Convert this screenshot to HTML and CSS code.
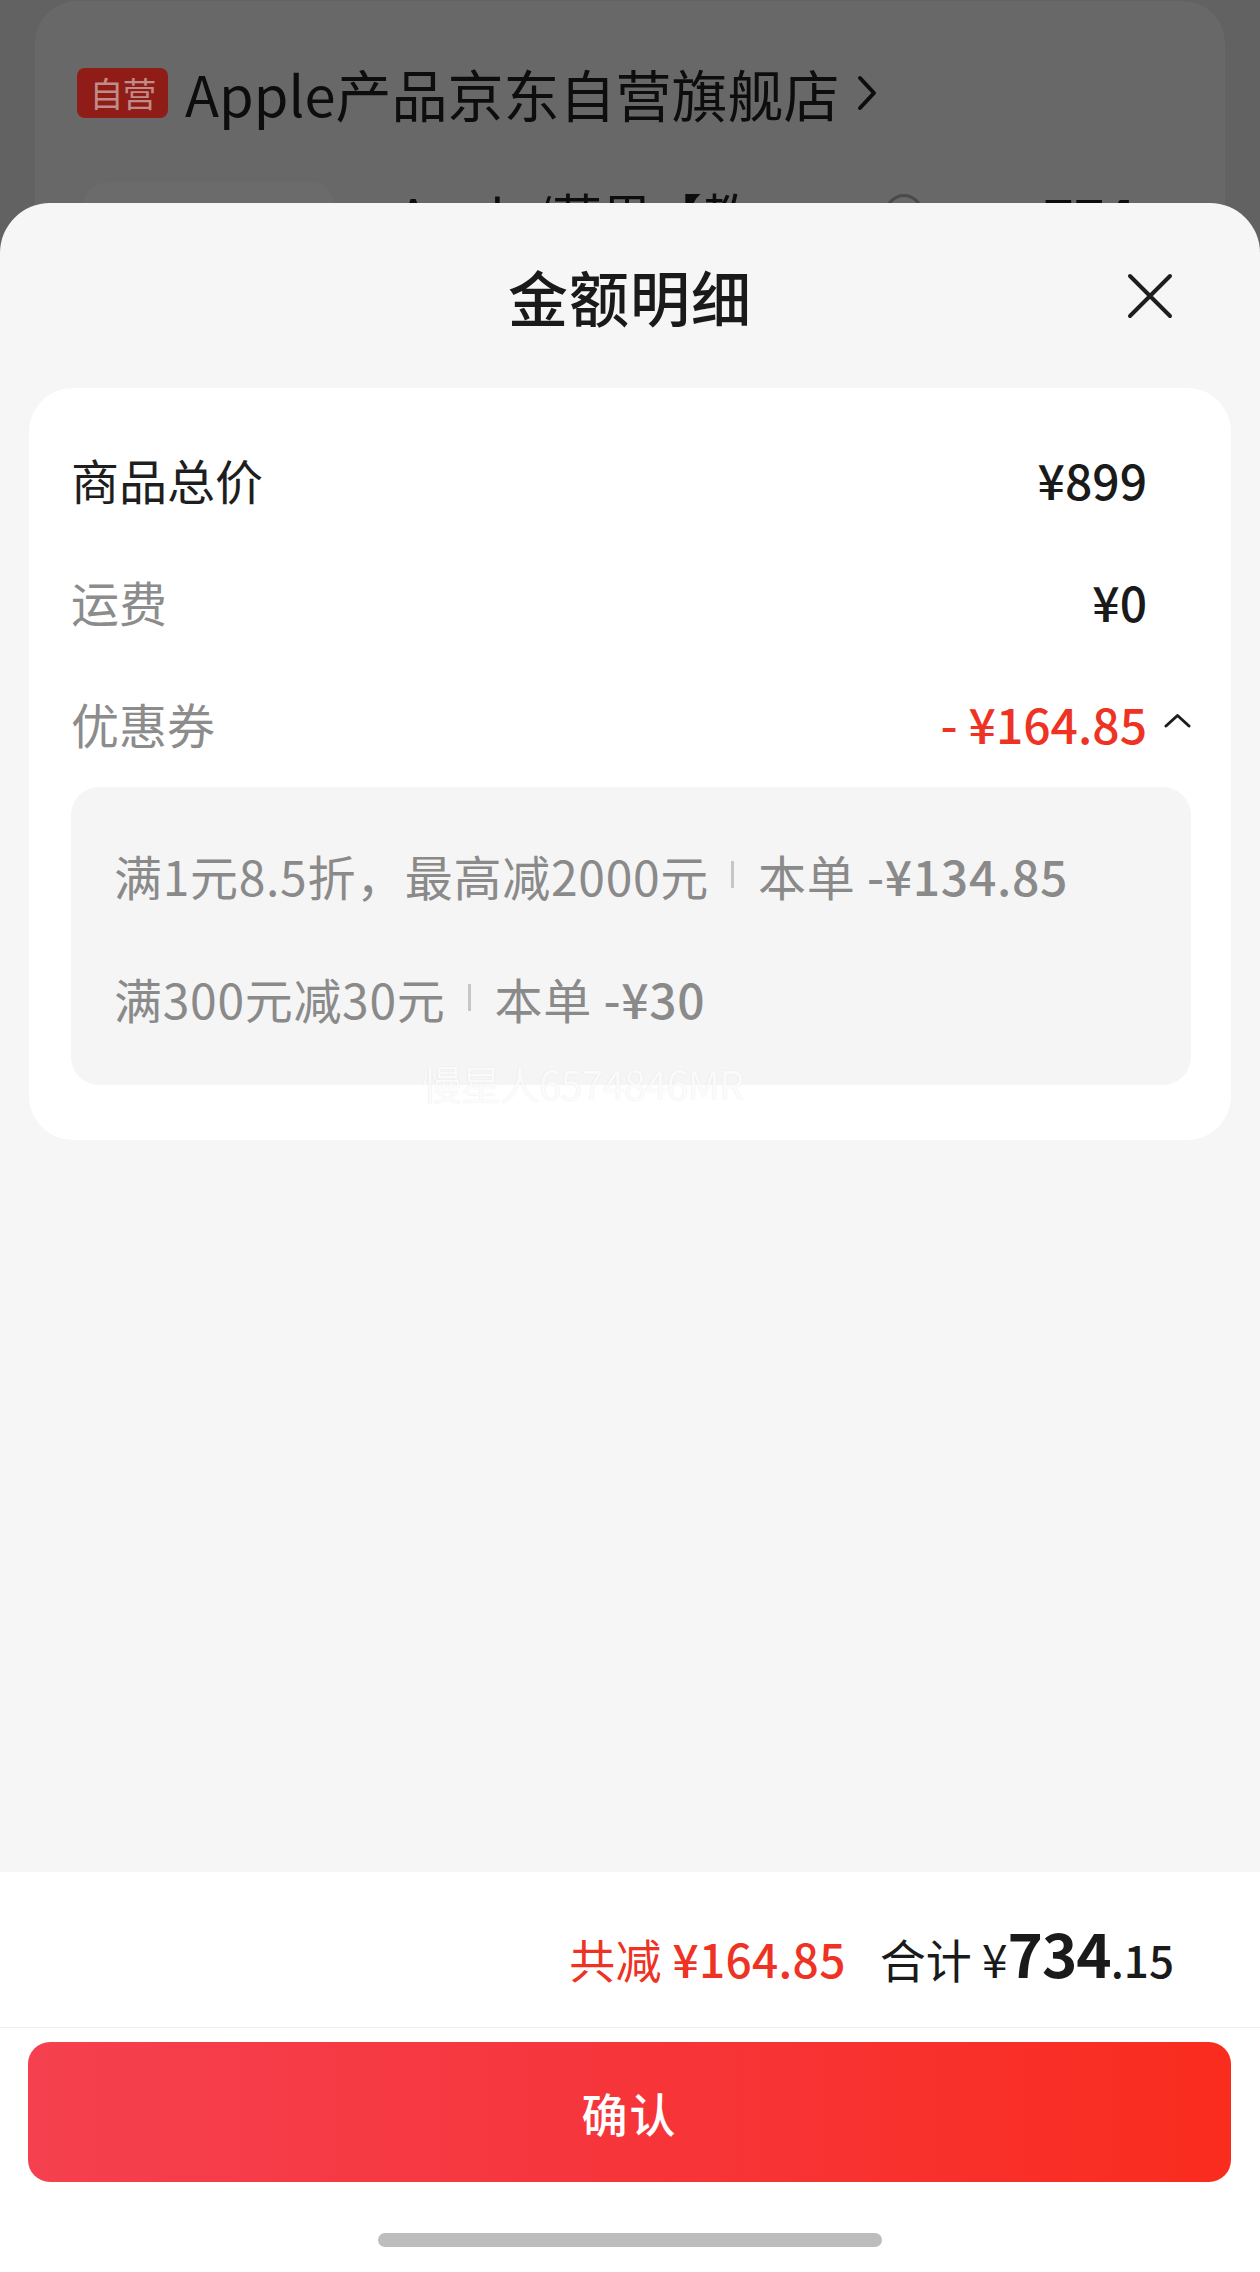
FILE: index.html
```html
<!DOCTYPE html>
<html lang="zh-CN">
<head>
<meta charset="utf-8">
<title>金额明细</title>
<link rel="stylesheet" href="styles.css">
</head>
<body>
<div class="page">
  <div class="store-card">
    <div class="store-row">
      <span class="badge">自营</span>
      <span class="store-name">Apple产品京东自营旗舰店</span>
      <svg class="store-chev" width="20" height="36" viewBox="0 0 20 36"><polyline points="3,3 17,18 3,33" fill="none" stroke="#0d0d0d" stroke-width="4" stroke-linecap="round" stroke-linejoin="round"/></svg>
    </div>
    <div class="item-row">
      <div class="thumb"></div>
      <div class="item-title">Apple/苹果【教育优惠】</div>
      <div class="radio"></div>
      <div class="item-price">774</div>
    </div>
  </div>
</div>

<div class="sheet">
  <div class="sheet-head">
    <span></span>
    <h2 class="sheet-title">金额明细</h2>
    <button class="close" aria-label="关闭">
      <svg width="46" height="46" viewBox="0 0 46 46"><path d="M3 3 L43 43 M43 3 L3 43" stroke="#1e1e1e" stroke-width="4" stroke-linecap="round" fill="none"/></svg>
    </button>
  </div>

  <div class="sheet-body">
    <div class="card">
      <div class="row">
        <span class="label label-dark">商品总价</span>
        <span class="value-group"><span class="value">¥899</span><span class="caret-slot"></span></span>
      </div>
      <div class="row">
        <span class="label">运费</span>
        <span class="value-group"><span class="value">¥0</span><span class="caret-slot"></span></span>
      </div>
      <div class="row">
        <span class="label">优惠券</span>
        <span class="value-group"><span class="value value-red">-&nbsp;¥164.85</span><span class="caret-slot"><svg width="27" height="15" viewBox="0 0 27 15"><polyline points="2,13 13.5,2.5 25,13" fill="none" stroke="#1e1e1e" stroke-width="3" stroke-linecap="round" stroke-linejoin="round"/></svg></span></span>
      </div>
      <div class="coupon-box">
        <div class="coupon-line"><span>满1元8.5折，最高减2000元</span><i class="sep"></i><span>本单 </span><span class="coupon-amt">-¥134.85</span></div>
        <div class="coupon-line"><span>满300元减30元</span><i class="sep"></i><span>本单 </span><span class="coupon-amt">-¥30</span></div>
      </div>
    </div>
  </div>

  <div class="footer">
    <div class="totals">
      <span class="saved">共减 <b>¥164.85</b></span>
      <span class="total-label">合计 ¥</span><span class="total-int">734</span><span class="total-dec">.15</span>
    </div>
    <div class="confirm-wrap"><button class="confirm">确认</button></div>
    <div class="home-bar"></div>
  </div>

  <div class="watermark">慢星人6574846MR</div>
</div>
</body>
</html>
```

FILE: styles.css
```css
* { box-sizing: border-box; }

html, body {
  margin: 0;
  padding: 0;
}

body {
  width: 1260px;
  height: 2272px;
  overflow: hidden;
  position: relative;
  background: #626262;
  font-family: "Noto Sans CJK SC", "Noto Sans", "Liberation Sans", sans-serif;
}

/* ---------- dimmed page behind ---------- */
.page {
  padding: 0 35px;
}

.store-card {
  height: 400px;
  margin-top: 1px;
  background: #686868;
  border-radius: 42px 42px 0 0;
  padding: 66px 0 0 42px;
}

.store-row {
  display: flex;
  align-items: center;
  height: 52px;
}

.badge {
  width: 91px;
  height: 50px;
  border-radius: 8px;
  background: #8f1c16;
  color: #c08c89;
  font-size: 34px;
  line-height: 50px;
  text-align: center;
  letter-spacing: -1px;
}

.store-name {
  margin-left: 17px;
  font-size: 56px;
  line-height: 1;
  color: #0d0d0d;
}

.store-chev {
  margin-left: 18px;
}

.item-row {
  display: flex;
  align-items: flex-start;
  margin-top: 63px;
  padding-left: 7px;
}

.thumb {
  width: 250px;
  height: 250px;
  border-radius: 22px;
  background: #6b6b6b;
}

.item-title {
  margin-left: 64px;
  margin-top: 2px;
  font-size: 50px;
  line-height: 1.2;
  color: #0d0d0d;
  width: 362px;
  height: 60px;
  overflow: hidden;
}

.radio {
  margin-left: 125px;
  margin-top: 12px;
  width: 38px;
  height: 38px;
  border-radius: 50%;
  border: 3px solid #4a4a4a;
}

.item-price {
  margin-left: 120px;
  margin-top: 4px;
  font-size: 52px;
  font-weight: 700;
  line-height: 1.2;
  color: #0d0d0d;
}

/* ---------- bottom sheet ---------- */
.sheet {
  position: absolute;
  left: 0;
  right: 0;
  top: 203px;
  height: 2069px;
  display: flex;
  flex-direction: column;
  background: #f6f6f6;
  border-radius: 50px 50px 0 0;
  overflow: hidden;
}

.sheet-head {
  height: 185px;
  flex: none;
  display: grid;
  grid-template-columns: 1fr auto 1fr;
  align-items: center;
  padding: 0 87px;
}

.sheet-title {
  margin: 0;
  font-size: 60px;
  font-weight: 500;
  color: #1a1a1a;
  line-height: 1;
  letter-spacing: 1px;
}

.close {
  justify-self: end;
  width: 46px;
  height: 46px;
  padding: 0;
  border: 0;
  background: none;
  display: flex;
}

.sheet-body {
  flex: 1;
}

.card {
  margin: 0 29px;
  background: #fff;
  border-radius: 44px;
  padding: 30px 40px 55px 42px;
}

.row {
  height: 122px;
  display: flex;
  align-items: center;
  justify-content: space-between;
}

.label {
  font-size: 48px;
  line-height: 1;
  color: #8c8c8c;
}

.label-dark {
  color: #1e1e1e;
}

.value-group {
  display: flex;
  align-items: center;
}

.value {
  font-size: 48px;
  font-weight: 500;
  line-height: 1;
  color: #1a1a1a;
}

.value-red {
  color: #ee3324;
}

.caret-slot {
  width: 44px;
  display: flex;
  justify-content: flex-end;
  align-items: center;
  padding-bottom: 6px;
}

.coupon-box {
  margin-top: 3px;
  background: #f5f5f5;
  border-radius: 28px;
  padding: 26px 20px 26px 43px;
}

.coupon-line {
  height: 123px;
  display: flex;
  align-items: center;
  font-size: 48px;
  line-height: 1;
  color: #8a8a8a;
  white-space: pre;
  letter-spacing: 0.7px;
}

.sep {
  display: inline-block;
  width: 3px;
  height: 27px;
  background: #c6c6c6;
  margin: 0 24px 0 22px;
}

.coupon-amt {
  font-weight: 500;
}

/* ---------- footer ---------- */
.footer {
  height: 400px;
  flex: none;
  background: #fff;
  display: flex;
  flex-direction: column;
  align-items: center;
}

.totals {
  align-self: stretch;
  height: 156px;
  border-bottom: 1px solid #ededed;
  display: flex;
  justify-content: flex-end;
  align-items: baseline;
  padding: 50px 86px 0 0;
  color: #1a1a1a;
  line-height: 1;
}

.saved {
  font-size: 46px;
  color: #ee3324;
  margin-right: 34px;
  letter-spacing: 0.3px;
}

.saved b {
  font-weight: 500;
}

.total-label {
  font-size: 46px;
}

.total-int {
  font-size: 60px;
  font-weight: 700;
  letter-spacing: -1px;
}

.total-dec {
  font-size: 44px;
  font-weight: 500;
}

.confirm-wrap {
  align-self: stretch;
  padding: 14px 29px 0 28px;
}

.confirm {
  width: 100%;
  height: 140px;
  border: 0;
  border-radius: 22px;
  background: linear-gradient(90deg, #f5404f 0%, #f6363d 45%, #fa2c1e 100%);
  color: #fff;
  font-family: inherit;
  font-size: 46px;
  font-weight: 500;
  letter-spacing: 2px;
}

.home-bar {
  margin-top: 51px;
  width: 504px;
  height: 14px;
  border-radius: 7px;
  background: #bdbdbd;
}

.watermark {
  position: absolute;
  left: 422px;
  top: 860px;
  font-size: 40px;
  line-height: 1;
  color: rgba(255, 255, 255, 0.9);
  text-shadow: 0 0 1px rgba(0, 0, 0, 0.12);
  letter-spacing: -1px;
  pointer-events: none;
}
```
